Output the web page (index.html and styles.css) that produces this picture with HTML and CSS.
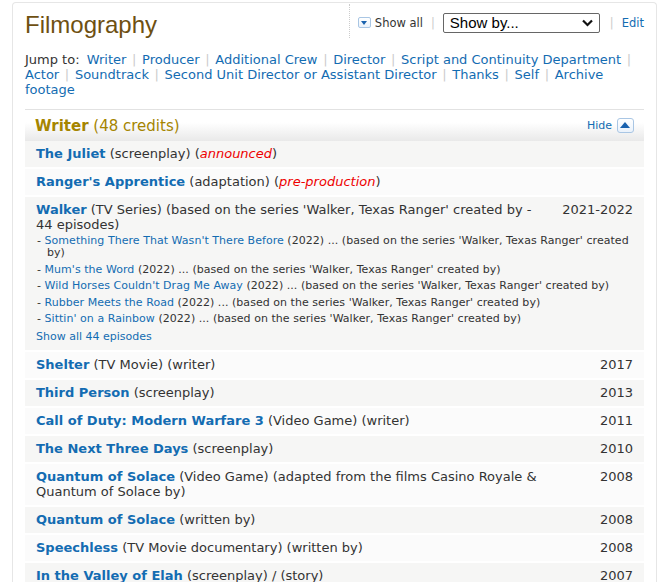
FILE: index.html
```html
<!DOCTYPE html>
<html lang="en">
<head>
  <meta charset="UTF-8" />
  <meta name="viewport" content="width=device-width, initial-scale=1.0"/>
  <title>Filmography</title>
  <link rel="stylesheet" href="styles.css">
</head>
<body>

  <div class="card">
    <div class="top">
      <h1 class="title">Filmography</h1>
      <div class="controls">
        <span class="toggle-icon down"></span>
        <span class="show-all">Show all</span>
        <span class="sep first">|</span>
        <div class="select">
          <span>Show by...</span>
          <svg width="11" height="8" viewBox="0 0 11 8"><path d="M1 1.5 L5.5 6 L10 1.5" fill="none" stroke="#111" stroke-width="2.2"/></svg>
        </div>
        <span class="sep last">|</span>
        <a href="#" class="edit">Edit</a>
      </div>
    </div>

    <div class="jump">
      <span class="jump-label">Jump to:</span> <a href="#">Writer</a> <span class="sep">|</span>
      <a href="#">Producer</a> <span class="sep">|</span>
      <a href="#">Additional Crew</a> <span class="sep">|</span>
      <a href="#">Director</a> <span class="sep">|</span>
      <a href="#">Script and Continuity Department</a> <span class="sep">|</span>
      <a href="#">Actor</a> <span class="sep">|</span>
      <a href="#">Soundtrack</a> <span class="sep">|</span>
      <a href="#">Second Unit Director or Assistant Director</a> <span class="sep">|</span>
      <a href="#">Thanks</a> <span class="sep">|</span>
      <a href="#">Self</a> <span class="sep">|</span>
      <a href="#">Archive footage</a>
    </div>

    <div class="section">
      <div class="section-head">
        <div class="section-name"><b>Writer</b> (48 credits)</div>
        <div class="hide"><a href="#">Hide</a> <span class="toggle-icon up"></span></div>
      </div>

      <div class="row odd">
        <a href="#" class="name">The Juliet</a> (screenplay) (<i class="status">announced</i>)
      </div>
      <div class="row even">
        <a href="#" class="name">Ranger's Apprentice</a> (adaptation) (<i class="status">pre-production</i>)
      </div>
      <div class="row odd">
        <span class="year">2021-2022</span>
        <a href="#" class="name">Walker</a> (TV Series) (based on the series 'Walker, Texas Ranger' created by - 44 episodes)
        <ul class="episodes">
          <li>- <a href="#">Something There That Wasn't There Before</a> (2022) ... (based on the series 'Walker, Texas Ranger' created by)</li>
          <li>- <a href="#">Mum's the Word</a> (2022) ... (based on the series 'Walker, Texas Ranger' created by)</li>
          <li>- <a href="#">Wild Horses Couldn't Drag Me Away</a> (2022) ... (based on the series 'Walker, Texas Ranger' created by)</li>
          <li>- <a href="#">Rubber Meets the Road</a> (2022) ... (based on the series 'Walker, Texas Ranger' created by)</li>
          <li>- <a href="#">Sittin' on a Rainbow</a> (2022) ... (based on the series 'Walker, Texas Ranger' created by)</li>
        </ul>
        <a href="#" class="all-eps">Show all 44 episodes</a>
      </div>
      <div class="row even">
        <span class="year">2017</span>
        <a href="#" class="name">Shelter</a> (TV Movie) (writer)
      </div>
      <div class="row odd">
        <span class="year">2013</span>
        <a href="#" class="name">Third Person</a> (screenplay)
      </div>
      <div class="row even">
        <span class="year">2011</span>
        <a href="#" class="name">Call of Duty: Modern Warfare 3</a> (Video Game) (writer)
      </div>
      <div class="row odd">
        <span class="year">2010</span>
        <a href="#" class="name">The Next Three Days</a> (screenplay)
      </div>
      <div class="row even">
        <span class="year">2008</span>
        <a href="#" class="name">Quantum of Solace</a> (Video Game) (adapted from the films Casino Royale &amp; Quantum of Solace by)
      </div>
      <div class="row odd">
        <span class="year">2008</span>
        <a href="#" class="name">Quantum of Solace</a> (written by)
      </div>
      <div class="row even">
        <span class="year">2008</span>
        <a href="#" class="name">Speechless</a> (TV Movie documentary) (written by)
      </div>
      <div class="row odd">
        <span class="year">2007</span>
        <a href="#" class="name">In the Valley of Elah</a> (screenplay) / (story)
      </div>
    </div>
  </div>

</body>
</html>
```

FILE: styles.css
```css
body {
  margin: 0;
  padding: 2px 5px 0 12px;
  background: white;
  font-family: "DejaVu Sans", Verdana, sans-serif;
  font-size: 13px;
  color: #333;
}

a {
  color: #136cb2;
  text-decoration: none;
}

.card {
  border: 1px solid #e6e6e6;
  border-bottom: none;
  border-radius: 4px 4px 0 0;
  padding: 8px 12px 0;
  height: 600px;
}

.top {
  display: flex;
  justify-content: space-between;
  align-items: flex-start;
}

.title {
  margin: 0;
  font-family: "Liberation Sans", Arial, sans-serif;
  font-size: 24px;
  line-height: 28px;
  font-weight: normal;
  color: #6e5012;
}

.controls {
  display: flex;
  align-items: center;
  margin-top: -7px;
  height: 31px;
  padding-top: 3px;
  padding-left: 8px;
  border-left: 1px dotted #ccc;
  font-size: 11.5px;
}

.controls .sep.first {
  margin: 0 8px;
}

.controls .sep.last {
  margin: 0 8px 0 10px;
}

.sep {
  color: #ccc;
}

.toggle-icon {
  display: inline-block;
  position: relative;
  width: 11px;
  height: 9px;
  border: 1px solid #a9c6e4;
  border-radius: 2px;
  background: linear-gradient(#fff, #eaf2fb);
  vertical-align: middle;
}

.toggle-icon::after {
  content: "";
  position: absolute;
  left: 2px;
  border-left: 3.5px solid transparent;
  border-right: 3.5px solid transparent;
}

.toggle-icon.down::after {
  top: 3px;
  border-top: 4px solid #1a62ae;
}

.toggle-icon.up {
  width: 15px;
  height: 13px;
  border-radius: 3px;
}

.toggle-icon.up::after {
  top: 3px;
  left: 2px;
  border-left-width: 5.5px;
  border-right-width: 5.5px;
  border-bottom: 6px solid #1a62ae;
}

.show-all {
  margin-left: 4px;
}

.select {
  display: flex;
  align-items: center;
  justify-content: space-between;
  width: 143px;
  height: 18px;
  padding: 0 6px 0 6px;
  border: 1px solid #666;
  border-radius: 2px;
  font-family: "Liberation Sans", Arial, sans-serif;
  font-size: 15px;
  color: #000;
  background: white;
}

.edit {
  font-size: 11.5px;
}

.jump {
  margin-top: 13px;
  line-height: 15px;
  width: 612px;
}

.jump-label {
  margin-right: 3px;
}

.jump .sep {
  margin: 0 1.5px;
}

.section {
  margin-top: 12px;
  border-top: 1px solid #e2e2e2;
}

.section-head {
  display: flex;
  justify-content: space-between;
  align-items: center;
  height: 31px;
  padding: 0 10px;
  background: linear-gradient(#fff, #fff 40%, #e9e9e9);
}

.section-name {
  font-size: 15px;
  color: #a58500;
}

.hide {
  display: flex;
  align-items: center;
  gap: 5px;
  font-size: 11px;
}

.row {
  padding: 5px 11px 6px;
  line-height: 15px;
  margin-bottom: 2px;
}

.odd {
  background: #f6f6f5;
}

.even {
  background: #fbfbfb;
}

.name {
  font-weight: bold;
}

.status {
  color: #e00;
}

.year {
  float: right;
  margin-left: 20px;
}

.episodes {
  list-style: none;
  margin: 3px 0 0;
  padding: 0;
  font-size: 11px;
  line-height: 12px;
  letter-spacing: 0.04px;
}

.episodes li {
  padding-left: 11px;
  text-indent: -10px;
  margin-bottom: 4.5px;
}

.all-eps {
  display: block;
  font-size: 11px;
  line-height: 14px;
}
```
